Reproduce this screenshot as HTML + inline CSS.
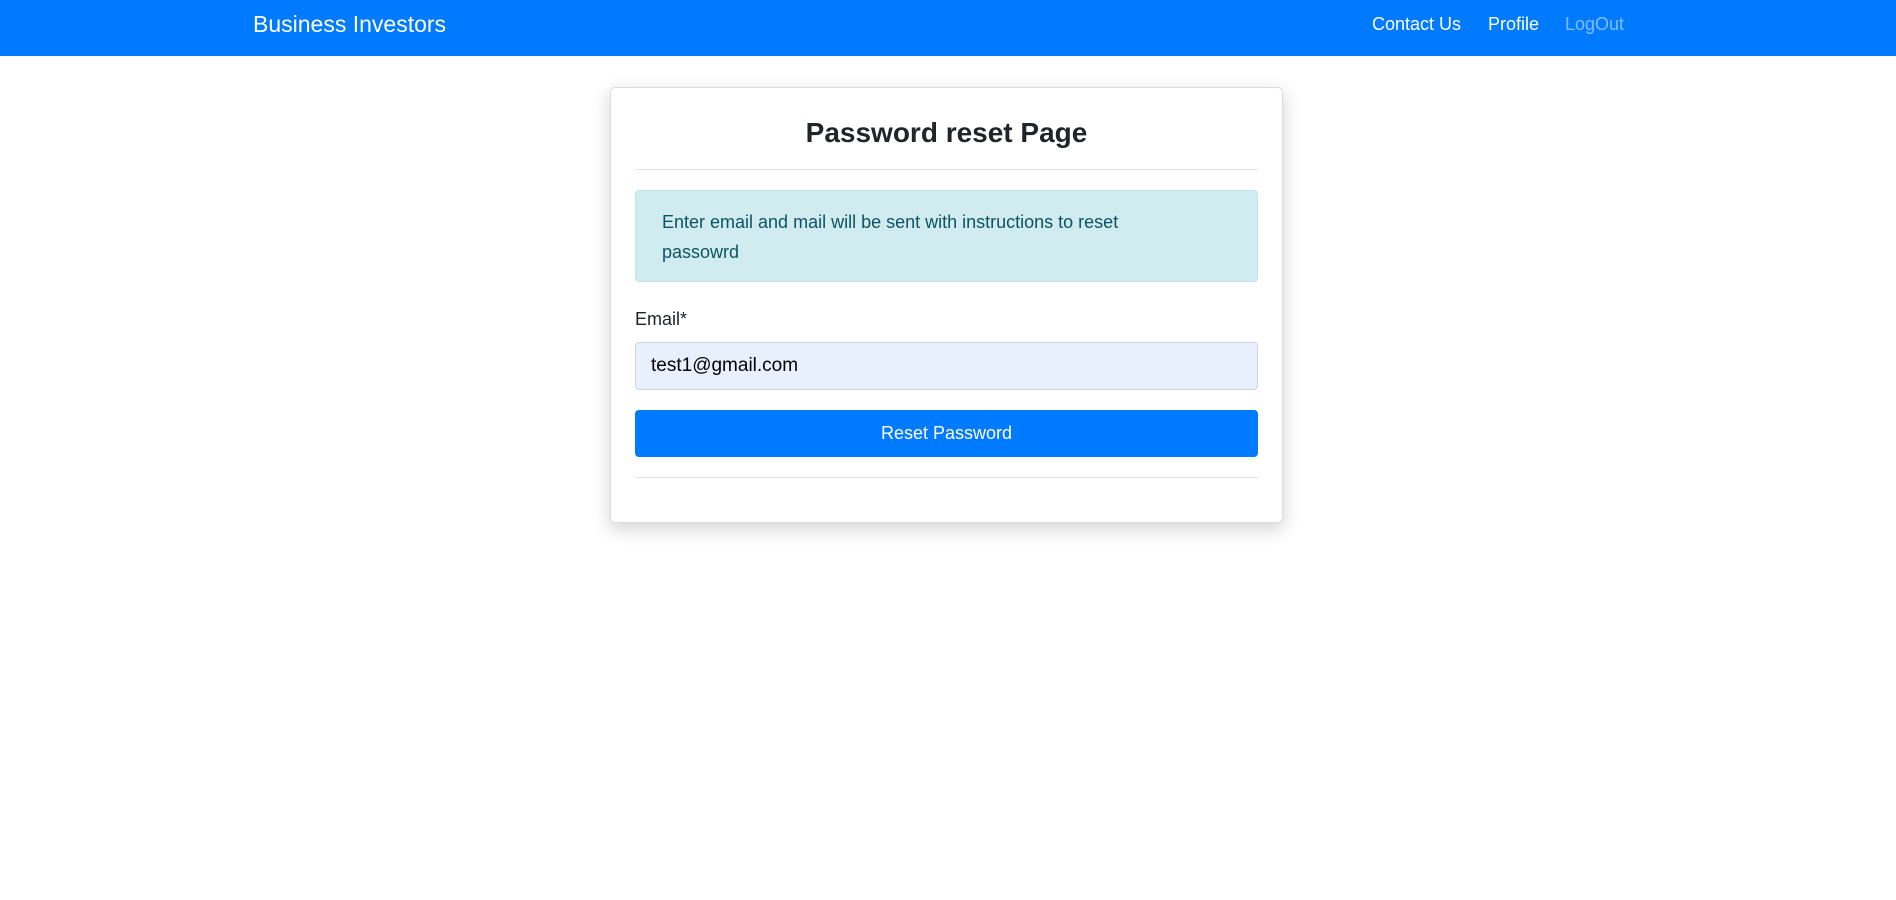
<!DOCTYPE html>
<html><head><meta charset="utf-8">
<style>
*{box-sizing:border-box;margin:0;padding:0}
body{width:1896px;height:900px;background:#fff;font-family:"Liberation Sans",sans-serif;color:#212529;position:relative;overflow:hidden}
.nav{position:absolute;left:0;top:0;width:1896px;height:56px;background:#007bff}
.brand{position:absolute;left:253px;top:10px;font-size:23px;color:#fff;line-height:28px}
.nl{position:absolute;top:13px;font-size:18px;line-height:22px;color:#fff}
.card{position:absolute;left:610px;top:87px;width:673px;height:436px;border:1px solid #dcdcdc;border-radius:5px;box-shadow:0 6px 18px rgba(0,0,0,.18);background:#fff}
h2{position:absolute;left:0;width:100%;top:28px;text-align:center;font-size:28px;font-weight:bold;line-height:34px;color:#212529}
.hr{position:absolute;left:24px;width:623px;height:1px;background:#e2e2e2}
.alert{position:absolute;left:24px;top:102px;width:623px;height:92px;background:#d1ecf1;border:1px solid #bee5eb;border-radius:4px;color:#0c5460;font-size:18px;line-height:30px;padding:16px 110px 0 26px}
.lbl{position:absolute;left:24px;top:219px;font-size:18px;line-height:24px}
.inp{position:absolute;left:24px;top:254px;width:623px;height:48px;background:#e8f0fe;border:1px solid #ced4da;border-radius:4px;font-size:19px;padding:12px 15px;color:#000}
.btn{position:absolute;left:24px;top:322px;width:623px;height:47px;background:#007bff;border-radius:4px;color:#fff;font-size:18px;text-align:center;line-height:47px}
</style></head><body>
<div class="nav">
<div class="brand">Business Investors</div>
<div class="nl" style="left:1372px">Contact Us</div>
<div class="nl" style="left:1488px">Profile</div>
<div class="nl" style="left:1565px;color:rgba(255,255,255,.5)">LogOut</div>
</div>
<div class="card">
<h2>Password reset Page</h2>
<div class="hr" style="top:81px"></div>
<div class="alert">Enter email and mail will be sent with instructions to reset passowrd</div>
<div class="lbl">Email*</div>
<div class="inp">test1@gmail.com</div>
<div class="btn">Reset Password</div>
<div class="hr" style="top:389px"></div>
</div>
</body></html>
